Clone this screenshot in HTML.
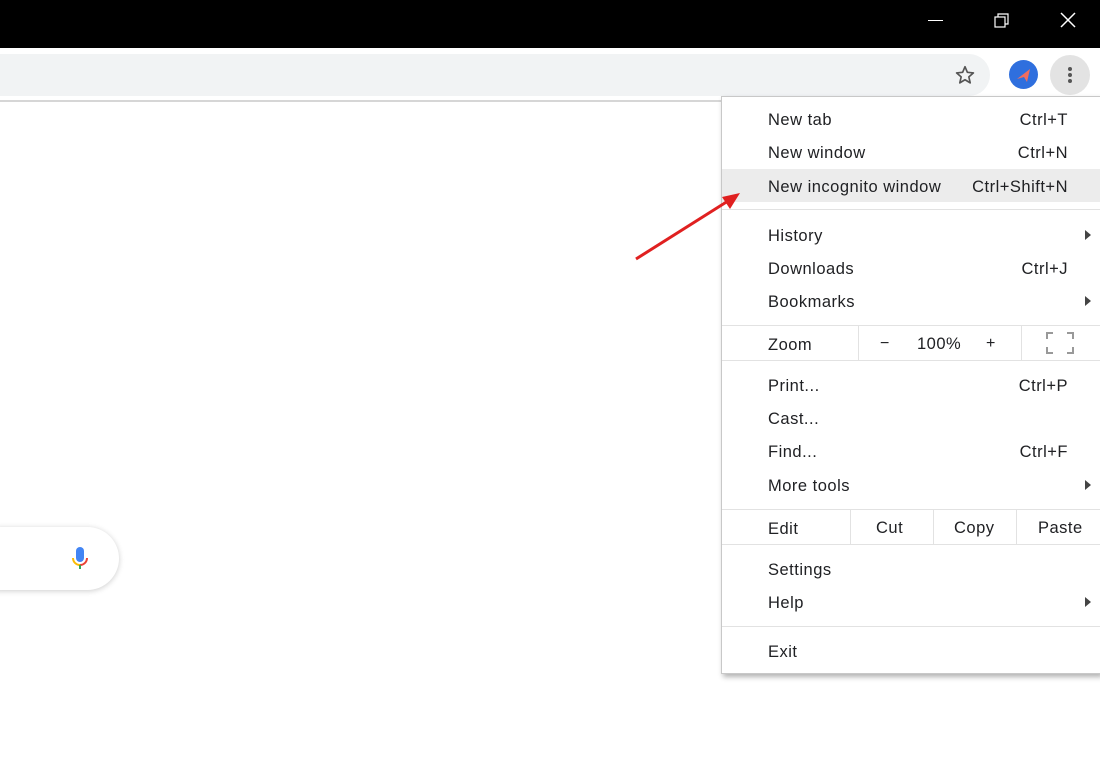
<!DOCTYPE html>
<html><head><style>
body{margin:0;width:1100px;height:760px;background:#fff;position:relative;overflow:hidden;font-family:"Liberation Sans",sans-serif;color:#202124}
.a{position:absolute}
.menu{left:721px;top:96px;width:379px;height:576px;background:#fff;border:1px solid #c8c8c8;border-right:none;box-shadow:2px 3px 5px rgba(0,0,0,.3)}
.menu div{letter-spacing:0.5px}
.t{position:absolute;font-size:16.5px;left:46px}
.s{position:absolute;font-size:16.5px;right:33px}
.sep{position:absolute;left:0;right:0;height:1px;background:#e2e2e2}
.arr{position:absolute;right:10px;width:0;height:0;border-top:5px solid transparent;border-bottom:5px solid transparent;border-left:6px solid #444}
.vl{position:absolute;width:1px;background:#e2e2e2}
</style></head><body>
<div class="a" style="left:0;top:0;width:1100px;height:48px;background:#000"></div>
<div class="a" style="left:928px;top:20px;width:15px;height:1px;background:#fff"></div>
<svg class="a" style="left:993px;top:12px" width="18" height="18"><rect x="2" y="5" width="10" height="10" fill="none" stroke="#fff" stroke-width="1.2"/><path d="M5 5V2h10v10h-3" fill="none" stroke="#fff" stroke-width="1.2"/></svg>
<svg class="a" style="left:1059px;top:11px" width="18" height="18"><path d="M2 2L16 16M16 2L2 16" stroke="#fff" stroke-width="1.5"/></svg>
<div class="a" style="left:0;top:48px;width:1100px;height:52px;background:#fff"></div>
<div class="a" style="left:-30px;top:54px;width:1020px;height:42px;background:#f1f3f4;border-radius:21px"></div>
<div class="a" style="left:0;top:100px;width:1100px;height:2px;background:#d6d6d6"></div>
<svg class="a" style="left:954px;top:64px" width="22" height="22" viewBox="0 0 24 24"><path d="M12 3l2.6 6.1 6.6.6-5 4.4 1.5 6.5L12 17.2 6.3 20.6l1.5-6.5-5-4.4 6.6-.6z" fill="none" stroke="#555" stroke-width="1.8" stroke-linejoin="round"/></svg>
<div class="a" style="left:1009px;top:60px;width:29px;height:29px;border-radius:50%;background:#2f6fde"></div>
<svg class="a" style="left:1013px;top:64px" width="22" height="22"><path d="M4 15L17 5L14 18L11 13Z" fill="#f26d5f"/></svg>
<div class="a" style="left:1050px;top:55px;width:40px;height:40px;border-radius:50%;background:#e3e3e3"></div>
<div class="a" style="left:1068px;top:67px;width:4px;height:4px;border-radius:50%;background:#555;box-shadow:0 6px 0 #555,0 12px 0 #555"></div>
<div class="a" style="left:-30px;top:527px;width:149px;height:63px;border-radius:32px;background:#fff;box-shadow:0 1px 6px rgba(0,0,0,.2)"></div>
<svg class="a" style="left:70px;top:545px" width="20" height="28"><rect x="6" y="2" width="8" height="15" rx="4" fill="#4285f4"/><path d="M3 13a7 7 0 0 0 7 7" fill="none" stroke="#fbbc05" stroke-width="2"/><path d="M10 20a7 7 0 0 0 7-7" fill="none" stroke="#ea4335" stroke-width="2"/><rect x="9" y="20" width="2" height="4" fill="#34a853"/></svg>
<div class="a menu">
<div class="a" style="left:0;right:0;top:72px;height:33px;background:#ececec"></div>
<div class="t" style="top:14px">New tab</div><div class="s" style="top:14px">Ctrl+T</div>
<div class="t" style="top:47px">New window</div><div class="s" style="top:47px">Ctrl+N</div>
<div class="t" style="top:81px">New incognito window</div><div class="s" style="top:81px">Ctrl+Shift+N</div>
<div class="sep" style="top:112px"></div>
<div class="t" style="top:130px">History</div><div class="arr" style="top:133px"></div>
<div class="t" style="top:163px">Downloads</div><div class="s" style="top:163px">Ctrl+J</div>
<div class="t" style="top:196px">Bookmarks</div><div class="arr" style="top:199px"></div>
<div class="sep" style="top:228px"></div>
<div class="t" style="top:239px">Zoom</div>
<div class="vl" style="left:136px;top:229px;height:34px"></div>
<div class="a" style="left:158px;top:238px;font-size:16px">−</div>
<div class="a" style="left:195px;top:238px;font-size:16.5px">100%</div>
<div class="a" style="left:264px;top:238px;font-size:16px">+</div>
<div class="vl" style="left:299px;top:229px;height:34px"></div>
<svg class="a" style="left:324px;top:235px" width="28" height="22"><path d="M1 7V1h6M21 1h6v6M27 15v6h-6M7 21H1v-6" fill="none" stroke="#999" stroke-width="2"/></svg>
<div class="sep" style="top:263px"></div>
<div class="t" style="top:280px">Print...</div><div class="s" style="top:280px">Ctrl+P</div>
<div class="t" style="top:313px">Cast...</div>
<div class="t" style="top:346px">Find...</div><div class="s" style="top:346px">Ctrl+F</div>
<div class="t" style="top:380px">More tools</div><div class="arr" style="top:383px"></div>
<div class="sep" style="top:412px"></div>
<div class="t" style="top:423px">Edit</div>
<div class="vl" style="left:128px;top:413px;height:34px"></div>
<div class="a" style="left:154px;top:422px;font-size:16.5px">Cut</div>
<div class="vl" style="left:211px;top:413px;height:34px"></div>
<div class="a" style="left:232px;top:422px;font-size:16.5px">Copy</div>
<div class="vl" style="left:294px;top:413px;height:34px"></div>
<div class="a" style="left:316px;top:422px;font-size:16.5px">Paste</div>
<div class="sep" style="top:447px"></div>
<div class="t" style="top:464px">Settings</div>
<div class="t" style="top:497px">Help</div><div class="arr" style="top:500px"></div>
<div class="sep" style="top:529px"></div>
<div class="t" style="top:546px">Exit</div>
</div>
<svg class="a" style="left:630px;top:185px;z-index:5" width="120" height="80"><path d="M6 74L98 16" stroke="#e02020" stroke-width="3"/><path d="M110 8L92 12L100 24Z" fill="#e02020"/></svg>
</body></html>
